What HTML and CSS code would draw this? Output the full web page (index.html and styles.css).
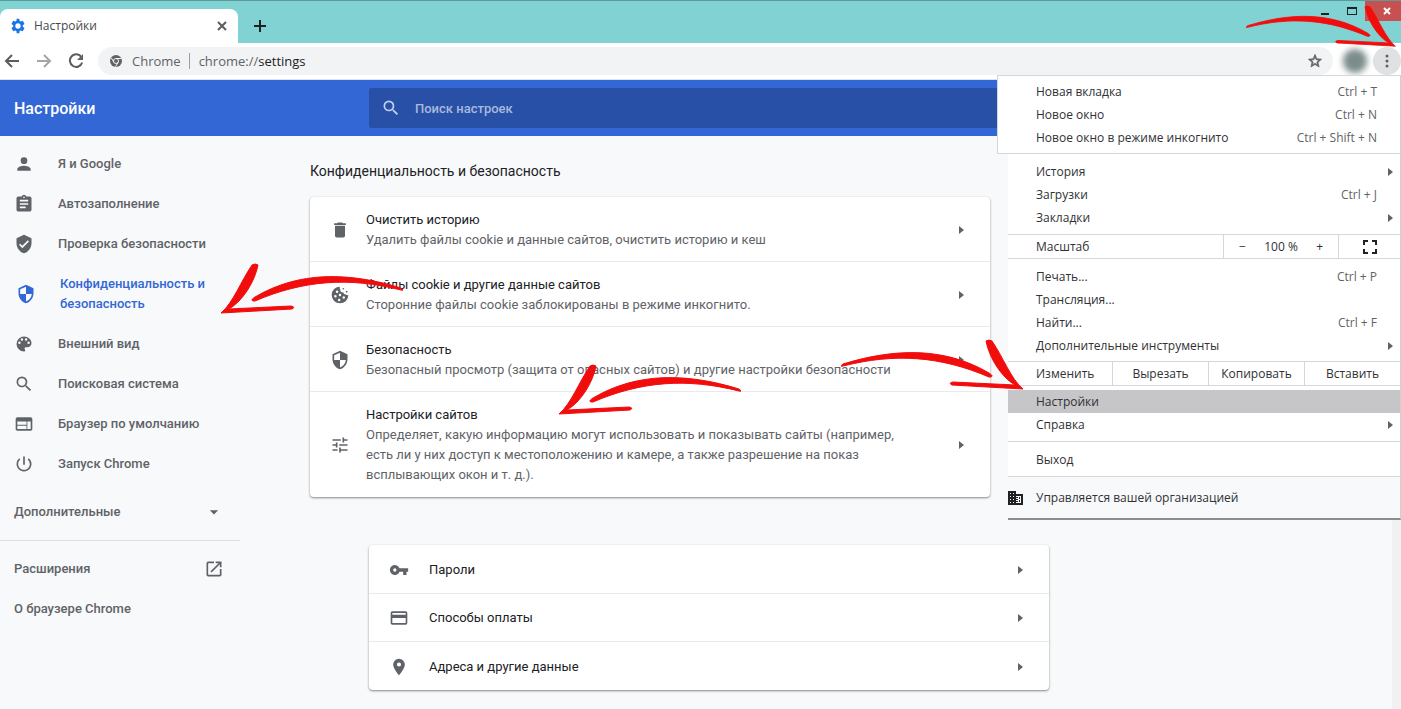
FILE: index.html
```html
<!DOCTYPE html>
<html lang="ru">
<head>
<meta charset="utf-8">
<title>Настройки</title>
<link rel="stylesheet" href="styles.css">
</head>
<body>
<svg class="defs" aria-hidden="true">
  <symbol id="arrow" viewBox="0 0 184 52">
    <path d="M33 2Q36 0 39 2C36 18 24 38 10 46L72 43Q77 44 73 46L2 50C14 40 22 18 33 2Z"/>
    <path d="M34 38C32 37 33 36 36 34C80 8 130 9 182 25Q186 28 182 27C130 14 85 17 36 38Z"/>
  </symbol>
  <symbol id="search" viewBox="0 0 24 24"><path d="M15.5 14h-.79l-.28-.27A6.47 6.47 0 0 0 16 9.5 6.5 6.5 0 1 0 9.5 16c1.61 0 3.09-.59 4.23-1.57l.27.28v.79l5 4.99L20.49 19l-4.99-5zm-6 0C7.01 14 5 11.99 5 9.5S7.01 5 9.5 5 14 7.01 14 9.5 11.99 14 9.5 14z"/></symbol>
  <symbol id="shield" viewBox="0 0 24 24"><path d="M12 1L3 5v6c0 5.55 3.84 10.74 9 12 5.16-1.26 9-6.45 9-12V5l-9-4zm0 10.99h7c-.53 4.12-3.28 7.79-7 8.94V12H5V6.3l7-3.11v8.8z"/></symbol>
</svg>
<div class="window">
  <div class="tabstrip">
    <div class="tab">
      <svg class="i16 blue" viewBox="0 0 24 24"><path fill-rule="evenodd" d="M19.14 12.94c.04-.3.06-.61.06-.94s-.02-.64-.07-.94l2.7-2.1-2.7-4.9-3.1 1.2a7.5 7.5 0 0 0-1.63-.94L14 1h-4l-.4 3.32c-.59.24-1.13.57-1.62.94L4.87 4.06l-2.7 4.9 2.7 2.1a6 6 0 0 0 0 1.88l-2.7 2.1 2.7 4.9 3.1-1.2c.5.38 1.03.7 1.63.94L10 23h4l.4-3.32c.59-.24 1.13-.56 1.62-.94l3.11 1.2 2.7-4.9zM12 16a4 4 0 1 1 0-8 4 4 0 0 1 0 8z"/></svg>
      <span class="tab-title">Настройки</span>
      <button class="bare" aria-label="Закрыть вкладку"><svg class="i10" viewBox="0 0 10 10"><path class="line" d="M1 1l8 8M9 1l-8 8"/></svg></button>
    </div>
    <button class="bare new-tab" aria-label="Новая вкладка"><svg class="i12 dark" viewBox="0 0 12 12"><path d="M5 0h2v5h5v2H7v5H5V7H0V5h5z"/></svg></button>
    <div class="controls">
      <button class="bare control" aria-label="Свернуть"><svg class="i12 dark" viewBox="0 0 12 12"><path d="M2 8h8v2H2z"/></svg></button>
      <button class="bare control" aria-label="Развернуть"><svg class="i12 dark" viewBox="0 0 12 12"><path fill-rule="evenodd" d="M1 2h10v8H1zM2 4v5h8V4z"/></svg></button>
      <button class="bare control close" aria-label="Закрыть"><svg class="i10" viewBox="0 0 10 10"><path class="line" d="M2 2l6 6M8 2l-6 6"/></svg></button>
    </div>
  </div>
  <div class="toolbar">
    <button class="bare" aria-label="Назад"><svg class="i16" viewBox="0 0 16 16"><path class="line" d="M15 8H2M8 2L2 8l6 6"/></svg></button>
    <button class="bare off" aria-label="Вперёд"><svg class="i16" viewBox="0 0 16 16"><path class="line" d="M1 8h13M8 2l6 6-6 6"/></svg></button>
    <button class="bare" aria-label="Обновить"><svg class="i16" viewBox="0 0 16 16"><path class="line" d="M13.5 4.2A6.3 6.3 0 1 0 14.200 9.500"/><path d="M15 1v6H9z"/></svg></button>
    <div class="omnibox">
      <svg class="i12" viewBox="0 0 24 24"><circle cx="12" cy="12" r="12"/><circle cx="12" cy="12" r="5" class="ring"/><path class="ring" d="M12 7h11M7.700 14.500L2.500 5.500M16.300 14.500L11 23.500"/></svg>
      <span class="origin">Chrome</span>
      <label class="url">chrome://<b>settings</b></label>
      <button class="bare star" aria-label="Добавить в закладки"><svg class="i16" viewBox="0 0 24 24"><path d="M22 9.240l-7.190-.62L12 2 9.190 8.630 2 9.240l5.460 4.730L5.820 21 12 17.270 18.180 21l-1.630-7.030L22 9.240zM12 15.400l-3.760 2.270 1-4.280-3.320-2.880 4.380-.38L12 6.100l1.710 4.040 4.380.38-3.320 2.880 1 4.280L12 15.400z"/></svg></button>
    </div>
    <span class="avatar"></span>
    <button class="bare more" aria-label="Меню"><svg class="i16" viewBox="0 0 16 16"><circle cx="8" cy="3" r="1.500"/><circle cx="8" cy="8" r="1.500"/><circle cx="8" cy="13" r="1.500"/></svg></button>
  </div>
  <header class="header">
    <h1>Настройки</h1>
    <label class="search"><svg class="i20" aria-hidden="true"><use href="#search"/></svg><input type="search" placeholder="Поиск настроек" aria-label="Поиск настроек"></label>
  </header>
  <div class="content">
    <nav class="sidebar">
      <a href="#me"><svg class="i20" viewBox="0 0 24 24"><path d="M12 12a4 4 0 1 0 0-8 4 4 0 0 0 0 8zm0 2c-2.670 0-8 1.340-8 4v2h16v-2c0-2.660-5.330-4-8-4z"/></svg>Я и Google</a>
      <a href="#autofill"><svg class="i20" viewBox="0 0 24 24"><path d="M19 3h-4.180a3 3 0 0 0-5.640 0H5a2 2 0 0 0-2 2v14c0 1.100.9 2 2 2h14a2 2 0 0 0 2-2V5a2 2 0 0 0-2-2zm-7 0a1 1 0 1 1 0 2 1 1 0 0 1 0-2zm2 14H7v-2h7v2zm3-4H7v-2h10v2zm0-4H7V7h10v2z"/></svg>Автозаполнение</a>
      <a href="#check"><svg class="i20" viewBox="0 0 24 24"><path d="M12 1L3 5v6c0 5.550 3.840 10.740 9 12 5.160-1.260 9-6.450 9-12V5l-9-4zm-2 16l-4-4 1.410-1.410L10 14.170l6.590-6.590L18 9l-8 8z"/></svg>Проверка безопасности</a>
      <a href="#privacy" class="current"><svg class="i20"><use href="#shield"/></svg><span>Конфиденциальность и безопасность</span></a>
      <a href="#look"><svg class="i20" viewBox="0 0 24 24"><path d="M12 3a9 9 0 0 0 0 18c.83 0 1.500-.67 1.500-1.500 0-.39-.15-.74-.39-1.010-.23-.26-.38-.61-.38-.99 0-.83.67-1.500 1.500-1.500H16a5 5 0 0 0 5-5c0-4.420-4.030-8-9-8zm-5.500 9a1.500 1.500 0 1 1 0-3 1.500 1.500 0 0 1 0 3zm3-4a1.500 1.500 0 1 1 0-3 1.500 1.500 0 0 1 0 3zm5 0a1.500 1.500 0 1 1 0-3 1.500 1.500 0 0 1 0 3zm3 4a1.500 1.500 0 1 1 0-3 1.500 1.500 0 0 1 0 3z"/></svg>Внешний вид</a>
      <a href="#engine"><svg class="i20"><use href="#search"/></svg>Поисковая система</a>
      <a href="#default"><svg class="i20" viewBox="0 0 24 24"><path d="M20 4H4a2 2 0 0 0-2 2v12c0 1.100.9 2 2 2h16a2 2 0 0 0 2-2V6a2 2 0 0 0-2-2zm-5 14H4v-4h11v4zm0-5H4V9h11v4zm5 5h-4V9h4v9z"/></svg>Браузер по умолчанию</a>
      <a href="#startup"><svg class="i20" viewBox="0 0 24 24"><path d="M13 3h-2v10h2V3zm4.830 2.170l-1.420 1.420A6.920 6.920 0 0 1 19 12a7 7 0 1 1-11.420-5.420L6.170 5.170A8.930 8.930 0 0 0 3 12a9 9 0 1 0 14.830-6.830z"/></svg>Запуск Chrome</a>
      <button class="bare advanced">Дополнительные<svg class="i20" viewBox="0 0 24 24"><path d="M7 10l5 5 5-5z"/></svg></button>
      <hr>
      <a href="#ext" class="plain">Расширения<svg class="i20" viewBox="0 0 24 24"><path d="M19 19H5V5h7V3H5a2 2 0 0 0-2 2v14a2 2 0 0 0 2 2h14c1.100 0 2-.9 2-2v-7h-2v7zM14 3v2h3.590l-9.830 9.830 1.410 1.410L19 6.410V10h2V3h-7z"/></svg></a>
      <a href="#about" class="plain">О браузере Chrome</a>
    </nav>
    <main class="main">
      <h2>Конфиденциальность и безопасность</h2>
      <section class="card">
        <a href="#clear" class="row"><svg class="i20" viewBox="0 0 24 24"><path d="M6 19a2 2 0 0 0 2 2h8a2 2 0 0 0 2-2V7H6v12zM19 4h-3.500l-1-1h-5l-1 1H5v2h14V4z"/></svg><span class="text"><span>Очистить историю</span><small>Удалить файлы cookie и данные сайтов, очистить историю и кеш</small></span><i class="chevron"></i></a>
        <a href="#cookies" class="row"><svg class="i20" viewBox="0 0 24 24"><path fill-rule="evenodd" d="M12 2a10 10 0 1 0 10 10c-.9.400-2 .2-2.700-.7-1.700.5-3.300-.7-3.300-2.500-2.400.4-4.300-1.600-3.600-3.800C11.300 4.300 11.400 3 12 2zM8.500 6.500a1.500 1.500 0 1 0 0 3 1.500 1.500 0 0 0 0-3zM6.500 12a1.500 1.500 0 1 0 0 3 1.500 1.500 0 0 0 0-3zM12 10.500a1.500 1.500 0 1 0 0 3 1.500 1.500 0 0 0 0-3zM11 16.500a1.500 1.500 0 1 0 0 3 1.500 1.500 0 0 0 0-3zM16.500 13.500a1.500 1.500 0 1 0 0 3 1.500 1.500 0 0 0 0-3z"/><circle cx="16" cy="4.500" r="1"/><circle cx="20" cy="8" r="1"/></svg><span class="text"><span>Файлы cookie и другие данные сайтов</span><small>Сторонние файлы cookie заблокированы в режиме инкогнито.</small></span><i class="chevron"></i></a>
        <a href="#security" class="row"><svg class="i20"><use href="#shield"/></svg><span class="text"><span>Безопасность</span><small>Безопасный просмотр (защита от опасных сайтов) и другие настройки безопасности</small></span><i class="chevron"></i></a>
        <a href="#sites" class="row"><svg class="i20" viewBox="0 0 24 24"><path d="M3 17v2h6v-2H3zM3 5v2h10V5H3zm10 16v-2h8v-2h-8v-2h-2v6h2zM7 9v2H3v2h4v2h2V9H7zm14 4v-2H11v2h10zm-6-4h2V7h4V5h-4V3h-2v6z"/></svg><span class="text"><span>Настройки сайтов</span><small>Определяет, какую информацию могут использовать и показывать сайты (например, есть ли у них доступ к местоположению и камере, а также разрешение на показ всплывающих окон и т. д.).</small></span><i class="chevron"></i></a>
      </section>
      <section class="card autofill">
        <a href="#passwords" class="row"><svg class="i20" viewBox="0 0 24 24"><path d="M12.650 10A6 6 0 1 0 12.650 14H17v4h4v-4h2v-4H12.650zM7 14a2 2 0 1 1 0-4 2 2 0 0 1 0 4z"/></svg><span class="text">Пароли</span><i class="chevron"></i></a>
        <a href="#payments" class="row"><svg class="i20" viewBox="0 0 24 24"><path d="M20 4H4a2 2 0 0 0-2 2v12c0 1.110.89 2 2 2h16a2 2 0 0 0 2-2V6a2 2 0 0 0-2-2zm0 14H4v-6h16v6zm0-10H4V6h16v2z"/></svg><span class="text">Способы оплаты</span><i class="chevron"></i></a>
        <a href="#addresses" class="row"><svg class="i20" viewBox="0 0 24 24"><path d="M12 2a7 7 0 0 0-7 7c0 5.250 7 13 7 13s7-7.750 7-13a7 7 0 0 0-7-7zm0 9.500a2.500 2.500 0 1 1 0-5 2.500 2.500 0 0 1 0 5z"/></svg><span class="text">Адреса и другие данные</span><i class="chevron"></i></a>
      </section>
    </main>
    <div class="scrollbar"></div>
  </div>
  <div class="menu">
    <div class="group first">
      <button class="item">Новая вкладка<kbd>Ctrl + T</kbd></button>
      <button class="item">Новое окно<kbd>Ctrl + N</kbd></button>
      <button class="item">Новое окно в режиме инкогнито<kbd>Ctrl + Shift + N</kbd></button>
    </div>
    <div class="group roomy">
      <button class="item">История<i class="chevron"></i></button>
      <button class="item">Загрузки<kbd>Ctrl + J</kbd></button>
      <button class="item">Закладки<i class="chevron"></i></button>
    </div>
    <div class="strip">
      <span class="strip-label">Масштаб</span>
      <div class="zoom"><button class="bare" aria-label="Уменьшить">−</button><span>100 %</span><button class="bare" aria-label="Увеличить">+</button></div>
      <button class="bare full" aria-label="Во весь экран"><svg class="i14 dark" viewBox="0 0 14 14"><path d="M0 0h5v2H2v3H0zM9 0h5v5h-2V2H9zM0 9h2v3h3v2H0zM12 9h2v5H9v-2h3z"/></svg></button>
    </div>
    <div class="group">
      <button class="item">Печать...<kbd>Ctrl + P</kbd></button>
      <button class="item">Трансляция...</button>
      <button class="item">Найти...<kbd>Ctrl + F</kbd></button>
      <button class="item">Дополнительные инструменты<i class="chevron"></i></button>
    </div>
    <div class="strip edit">
      <span class="strip-label">Изменить</span>
      <button class="bare">Вырезать</button><button class="bare">Копировать</button><button class="bare">Вставить</button>
    </div>
    <div class="group tight">
      <button class="item active">Настройки</button>
      <button class="item">Справка<i class="chevron"></i></button>
    </div>
    <div class="group roomy"><button class="item">Выход</button></div>
    <button class="managed"><svg class="i16 dark" viewBox="0 0 16 16"><path fill-rule="evenodd" d="M0 1h8v3h7v11H0zM2 3v1h1V3zM5 3v1h1V3zM2 6v1h1V6zM5 6v1h1V6zM2 9v1h1V9zM5 9v1h1V9zM2 12v1h1v-1zM5 12v1h1v-1zM8 6v1h2v1H8v1h2v1H8v1h2v1H8v1h5V6zM11 7h1v2h-1zM11 10h1v2h-1z"/></svg>Управляется вашей организацией</button>
  </div>
  <svg class="arrow a1"><use href="#arrow"/></svg>
  <svg class="arrow a2"><use href="#arrow"/></svg>
  <svg class="arrow a3"><use href="#arrow"/></svg>
  <svg class="arrow a4"><use href="#arrow"/></svg>
</div>
</body>
</html>
```

FILE: styles.css
```css
* { box-sizing: border-box; }
body { margin: 0; background: #f8f9fb; color: #202124; font: 13px/20px Roboto, sans-serif; }
a { color: inherit; text-decoration: none; }
h1, h2 { margin: 0; }
svg { display: block; flex: none; fill: #5f6368; }
.defs { position: absolute; width: 0; height: 0; }
.i10 { width: 10px; height: 10px; }
.i12 { width: 12px; height: 12px; }
.i14 { width: 14px; height: 14px; }
.i16 { width: 16px; height: 16px; }
.i20 { width: 20px; height: 20px; }
.blue { fill: #1a73e8; }
.dark { fill: #202124; }
.line { fill: none; stroke: #5a5d61; stroke-width: 2; }
.bare { display: flex; align-items: center; justify-content: center; padding: 0; border: 0; background: none; color: inherit; font: inherit; }
.window { display: flex; flex-direction: column; position: relative; min-height: 100vh; overflow: hidden; }

.tabstrip { display: flex; height: 43px; padding-top: 8px; border-top: 1px solid #5b9c9b; background: #80d3d2; }
.tab { display: flex; align-items: center; gap: 8px; width: 238px; padding: 0 11px 0 10px; border-radius: 8px 8px 0 0; background: #fff; font: 12px/16px "Open Sans", sans-serif; color: #45494d; }
.tab-title { flex: 1; }
.new-tab { margin-left: 16px; }
.controls { display: flex; height: 20px; margin: -8px 0 0 auto; }
.control { width: 27px; }
.close { width: 36px; padding-left: 8px; background: #c75050; }
.close .line { stroke: #fff; }
.toolbar { display: flex; align-items: center; gap: 16px; height: 37px; padding-left: 4px; border-bottom: 1px solid #dfe3e8; background: #fff; }
.off { opacity: .55; }
.omnibox { display: flex; flex: 1; align-items: center; height: 28px; margin-left: -2px; padding: 0 10px 0 12px; border-radius: 14px; background: #f1f3f4; color: #5f6368; font: 13px/20px "Open Sans", sans-serif; }
.ring { fill: none; stroke: #f1f3f4; stroke-width: 2; }
.origin { margin-left: 10px; padding-right: 8px; border-right: 1px solid #9aa0a6; line-height: 16px; }
.url { margin-left: 9px; }
.url b { color: #202124; font-weight: 400; }
.star { margin-left: auto; }
.star svg { stroke: #5f6368; stroke-width: 1; }
.avatar { width: 24px; height: 24px; margin: 0 -10px 0 -6px; border-radius: 50%; background: #7b8c8a; filter: blur(3px); }
.more { width: 28px; height: 28px; border-radius: 50%; background: #e0e1e2; }

.header { display: flex; align-items: center; height: 56px; padding-left: 14px; background: #3367d6; color: #fff; }
.header h1 { width: 355px; padding-top: 2px; font: 500 16px/24px Roboto, sans-serif; }
.search { display: flex; flex: 1; align-items: center; gap: 14px; max-width: 680px; height: 40px; padding: 0 12px; border-radius: 2px; background: #2850a7; }
.search svg { fill: #c2d1f0; }
.search input { flex: 1; padding: 2px 0 0; border: 0; outline: 0; background: none; color: #fff; font: 500 13px/20px Roboto, sans-serif; }
.search input::placeholder { color: #a9b9dc; opacity: 1; }

.content { display: flex; flex: 1; }
.sidebar { width: 240px; flex: none; padding-top: 8px; color: #5f6368; font-weight: 500; }
.sidebar a { display: flex; align-items: center; gap: 24px; min-height: 40px; padding: 0 14px; }
.sidebar .current { min-height: 60px; padding: 0 24px 0 16px; color: #3367d6; }
.current svg { fill: #3367d6; }
.advanced { justify-content: space-between; width: 100%; height: 40px; margin-top: 8px; padding: 0 16px 0 14px; }
.sidebar hr { height: 1px; margin: 8px 0; border: 0; background: #dcdfe3; }
.sidebar .plain { justify-content: space-between; padding-right: 16px; }
.main { flex: 1; padding: 24px 0 16px 70px; }
.main h2 { font: 400 14px/22px Roboto, sans-serif; }
.card { max-width: 680px; margin-top: 15px; border-radius: 4px; background: #fff; box-shadow: 0 1px 2px #3c404380, 0 1px 3px #3c404326; }
.autofill { margin: 48px 0 0 59px; }
.row { display: flex; align-items: center; gap: 16px; padding: 13px 26px 11px 20px; border-bottom: 1px solid #e8eaed; }
.row:last-child { padding-bottom: 12px; border-bottom: 0; }
.text { display: grid; flex: 1; max-width: 550px; }
.row small { color: #5f6368; font-size: 13px; }
.autofill .row { gap: 20px; height: 48px; padding: 1px 26px 0 20px; }
.autofill .row:first-child { height: 49px; }
.chevron { width: 0; height: 0; margin-left: auto; border: solid transparent; border-width: 4px 0 4px 5px; border-left-color: #5f6368; }
.scrollbar { width: 9px; background: #f1f1f1; }

.menu { position: absolute; z-index: 1; top: 75px; right: 0; width: 404px; padding-left: 11px; font: 12px/16px "Open Sans", sans-serif; color: #303134; }
.group, .strip, .managed { border-right: 1px solid #cfd1d3; border-bottom: 1px solid #d5d7d9; background: #fff; }
.group { padding: 6px 0 4px; }
.roomy { padding-bottom: 5px; }
.first { margin-left: -11px; padding: 4px 0 4px 10px; border-top: 1px solid #d5d7d9; border-left: 1px solid #d5d7d9; }
.tight { padding: 4px 0 5px; }
.item { display: flex; align-items: center; width: 100%; height: 23px; padding: 0 7px 0 28px; border: 0; background: none; color: inherit; font: inherit; }
.item kbd { margin: 0 16px 0 auto; color: #5f6368; font: inherit; }
.active { background: #c6c6c8; }
.strip { display: flex; height: 24px; line-height: 24px; }
.strip-label { flex: 1; padding-left: 28px; }
.zoom { display: flex; align-items: center; justify-content: space-between; width: 115px; padding: 0 15px; border-left: 1px solid #d5d7d9; }
.full { width: 62px; border-left: 1px solid #d5d7d9; }
.edit .bare { width: 96px; border-left: 1px solid #d5d7d9; }
.managed { display: flex; align-items: center; gap: 12px; width: 100%; height: 43px; padding: 0; border-width: 0 1px 2px 0; border-style: solid; border-color: #cfd1d3; border-bottom-color: #8b8e90; background: #f8f9fb; color: inherit; font: inherit; }

.arrow { position: absolute; z-index: 2; width: 184px; height: 52px; fill: #f20d0d; stroke: #f20d0d; stroke-width: 1; stroke-linejoin: round; }
.a1 { left: 219px; top: 263px; }
.a2 { left: 557px; top: 364px; }
.a3 { left: 841px; top: 339px; transform: scaleX(-1); }
.a4 { left: 1246px; top: 5px; width: 151px; height: 43px; transform: scaleX(-1); }
```
